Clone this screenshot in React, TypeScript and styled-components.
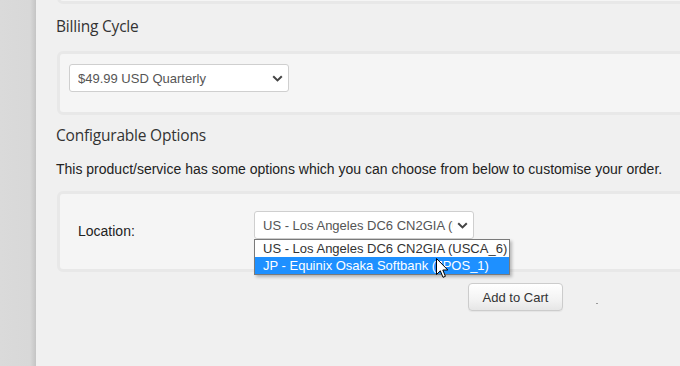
import React from 'react';
import styled, { createGlobalStyle } from 'styled-components';

const GlobalStyle = createGlobalStyle`
  html, body {
    margin: 0;
    padding: 0;
    overflow: hidden;
    background: #dadada;
  }
  body {
    font-family: 'Liberation Sans', Arial, sans-serif;
  }
`;

const cycles = ['$49.99 USD Quarterly'];

const locations = [
  'US - Los Angeles DC6 CN2GIA (USCA_6)',
  'JP - Equinix Osaka Softbank (JPOS_1)',
];

const App: React.FC = () => {
  return (
    <>
      <GlobalStyle />
      <Page>
        <Side />
        <Main>
          <Well $h={34} $top={-30} />
          <Heading $top={10} $bottom={13}>Billing Cycle</Heading>
          <Well $pad="10px 9px 20px">
            <SelectBox $w={220}>
              <SelectText>{cycles[0]}</SelectText>
              <Chevron />
            </SelectBox>
          </Well>
          <Heading $top={8} $bottom={14}>Configurable Options</Heading>
          <Intro>
            This product/service has some options which you can choose from below to customise your order.
          </Intro>
          <Well $pad="17px 18px 28px">
            <FieldRow>
              <Label>Location:</Label>
              <SelectBox $w={220}>
                <SelectText>{locations[0]}</SelectText>
                <Chevron />
                <OptionList>
                  {locations.map((l, i) => (
                    <Option key={l} $active={i === 1}>
                      {l}
                    </Option>
                  ))}
                </OptionList>
              </SelectBox>
            </FieldRow>
          </Well>
          <ButtonRow>
            <CartButton>Add to Cart</CartButton>
            <Speck />
          </ButtonRow>
          <Pointer />
        </Main>
      </Page>
    </>
  );
};

const Chevron: React.FC = () => (
  <ChevronSvg width="11" height="7" viewBox="0 0 11 7">
    <path d="M1.2 1.2 L5.5 5.4 L9.8 1.2" fill="none" stroke="#444" strokeWidth="2" />
  </ChevronSvg>
);

const Pointer: React.FC = () => (
  <CursorSvg width="13" height="21" viewBox="0 0 13 21">
    <path
      d="M0.5 0.5 L0.5 16.5 L4.3 12.8 L7 19.3 L9.4 18.3 L6.8 12 L11.8 12 Z"
      fill="#fff"
      stroke="#000"
      strokeWidth="1"
      strokeLinejoin="miter"
    />
  </CursorSvg>
);

export default App;

const Page = styled.div`
  display: flex;
  height: 366px;
  width: 680px;
  overflow: hidden;
`;

const Side = styled.div`
  width: 36px;
  flex: none;
  background: linear-gradient(to right, #dadada 0, #d8d8d8 30px, #c4c4c4 36px);
`;

const Main = styled.div`
  position: relative;
  flex: 1;
  min-width: 0;
  background: #f0f0f0;
  padding-left: 20px;
  display: flex;
  flex-direction: column;
  align-items: flex-start;
`;

const Well = styled.div<{ $h?: number; $top?: number; $pad?: string }>`
  box-sizing: border-box;
  align-self: stretch;
  margin-left: 1px;
  margin-right: -30px;
  margin-top: ${(p) => (p.$top !== undefined ? `${p.$top}px` : '0')};
  height: ${(p) => (p.$h ? `${p.$h}px` : 'auto')};
  padding: ${(p) => p.$pad || '0'};
  background: #f5f5f5;
  border: 3px solid #e8e8e8;
  border-radius: 6px;
`;

const Heading = styled.h3<{ $top: number; $bottom: number }>`
  margin: ${(p) => p.$top}px 0 ${(p) => p.$bottom}px;
  font-family: 'Open Sans', 'Noto Sans', sans-serif;
  font-weight: 400;
  font-size: 15.5px;
  line-height: 24px;
  color: #333;
  letter-spacing: -0.2px;
`;

const Intro = styled.p`
  margin: -2px 0 12px;
  font-size: 14px;
  line-height: 20px;
  color: #222;
`;

const FieldRow = styled.div`
  display: flex;
  align-items: flex-start;
`;

const Label = styled.label`
  width: 176px;
  flex: none;
  padding-top: 10px;
  font-size: 14px;
  line-height: 20px;
  color: #222;
`;

const SelectBox = styled.div<{ $w: number }>`
  position: relative;
  box-sizing: border-box;
  width: ${(p) => p.$w}px;
  height: 28px;
  display: flex;
  align-items: center;
  padding: 0 5px 0 8px;
  background: #fff;
  border: 1px solid #cfcfcf;
  border-radius: 3px;
  font-size: 13px;
  color: #555;
`;

const SelectText = styled.span`
  flex: 1;
  min-width: 0;
  overflow: hidden;
  white-space: nowrap;
  text-overflow: clip;
`;

const ChevronSvg = styled.svg`
  flex: none;
  margin-left: 4px;
`;

const OptionList = styled.div`
  position: absolute;
  left: -1px;
  top: 27px;
  width: 256px;
  box-sizing: border-box;
  background: #fff;
  border: 1px solid #7a7a7a;
  box-shadow: 2px 2px 3px rgba(0, 0, 0, 0.25);
  padding: 0;
  z-index: 2;
`;

const Option = styled.div<{ $active?: boolean }>`
  height: 17px;
  line-height: 17px;
  padding-left: 8px;
  white-space: nowrap;
  font-size: 13px;
  background: ${(p) => (p.$active ? '#1e90ff' : '#fff')};
  color: ${(p) => (p.$active ? '#fff' : '#333')};
`;

const ButtonRow = styled.div`
  display: flex;
  align-items: flex-end;
  margin-top: 11px;
  padding-left: 412px;
`;

const CartButton = styled.button`
  box-sizing: border-box;
  width: 95px;
  height: 28px;
  padding: 0;
  font-family: 'Liberation Sans', Arial, sans-serif;
  font-size: 13px;
  color: #333;
  background: linear-gradient(to bottom, #ffffff 0, #f3f3f3 60%, #e6e6e6 100%);
  border: 1px solid #cccccc;
  border-radius: 4px;
  box-shadow: 0 1px 1px rgba(0, 0, 0, 0.05);
`;

const Speck = styled.span`
  width: 2px;
  height: 1px;
  margin: 0 0 7px 33px;
  background: #9a9a9a;
`;

const CursorSvg = styled.svg`
  position: absolute;
  left: 400px;
  top: 258px;
  z-index: 5;
`;
